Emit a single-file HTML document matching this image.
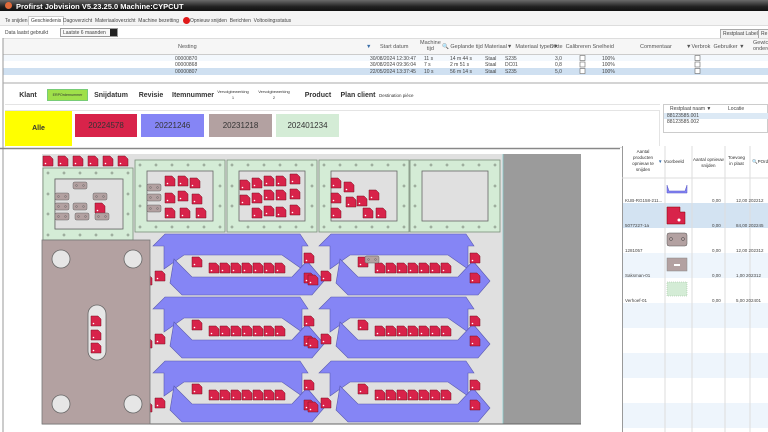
<!DOCTYPE html>
<html><head><meta charset="utf-8">
<style>
*{margin:0;padding:0;box-sizing:border-box}
body{width:768px;height:432px;overflow:hidden;background:#fff;font-family:"Liberation Sans",sans-serif;position:relative;color:#333}
.a{position:absolute;white-space:nowrap}
.t{font-size:5px;color:#444}
.h{font-size:5.5px;color:#555}
.f{font-size:7px;color:#333;text-align:center}
</style></head><body>
<div class="a" style="left:0;top:0;width:768px;height:11px;background:linear-gradient(#6a6a6a,#222 60%,#111)"></div>
<div class="a" style="left:5px;top:2px;width:7px;height:7px;border-radius:50%;background:#e06a3a"></div>
<div class="a" style="left:16px;top:1.5px;font-size:7.5px;font-weight:bold;color:#fff">Profirst Jobvision V5.23.25.0 Machine:CYPCUT</div>
<div class="a" style="left:0;top:11px;width:768px;height:15px;background:#f4f4f4;border-bottom:1px solid #ddd"></div>
<div class="a t" style="left:5px;top:18px">Te snijden</div>
<div class="a t" style="left:28px;top:16px;background:#fff;border:1px solid #ccc;border-bottom:none;padding:1px 2px">Geschiedenis</div>
<div class="a t" style="left:63px;top:18px">Dagoverzicht &nbsp;Materiaaloverzicht &nbsp;Machine bezetting</div>
<div class="a" style="left:183px;top:17px;width:7px;height:7px;border-radius:50%;background:#e01818"></div>
<div class="a t" style="left:190px;top:18px">Opnieuw snijden &nbsp;Berichten &nbsp;Voltooiingsstatus</div>
<div class="a t" style="left:5px;top:30px">Data laatst gebruikt</div>
<div class="a t" style="left:60px;top:28px;width:58px;height:9px;border:1px solid #999;background:#f8f8f8;padding:1px 2px">Laatste 6 maanden</div>
<div class="a" style="left:110px;top:29px;width:7px;height:7px;background:#222"></div>
<div class="a t" style="left:720px;top:29px;border:1px solid #aaa;background:#f4f4f4;padding:1px 2px">Restplaat Labels</div>
<div class="a t" style="left:758px;top:29px;border:1px solid #aaa;background:#f4f4f4;padding:1px 2px;width:12px">Re</div>
<!-- top table -->
<div class="a" style="left:3px;top:38px;width:765px;height:17px;background:#f6f6f6;border-top:1px solid #ddd;border-bottom:1px solid #ccc"></div>
<div class="a h" style="left:178px;top:44px">Nesting</div>
<div class="a h" style="left:366px;top:44px;color:#3a6ea8">▼</div>
<div class="a h" style="left:380px;top:44px">Start datum</div>
<div class="a h" style="left:420px;top:40px;text-align:center;line-height:6px">Machine<br>tijd</div>
<div class="a h" style="left:442px;top:44px">🔍 Geplande tijd Materiaal▼ &nbsp;Materiaal typen▼</div>
<div class="a h" style="left:550px;top:44px">Dikte &nbsp;Calibreren Snelheid</div>
<div class="a h" style="left:640px;top:44px">Commentaar</div>
<div class="a h" style="left:686px;top:44px">▼Verbrok &nbsp;Gebruiker ▼</div>
<div class="a h" style="left:753px;top:40px;line-height:6px">Gewicht<br>onderde</div>
<div class="a" style="left:3px;top:55px;width:765px;height:6px;background:#f3f8fd"></div>
<div class="a" style="left:3px;top:68px;width:765px;height:7px;background:#cfe0f1"></div>
<div class="a t" style="left:175px;top:55.5px;line-height:6.5px">00000870<br>00000868<br>00000807</div>
<div class="a t" style="left:370px;top:55.5px;line-height:6.5px">30/08/2024 12:30:47<br>30/08/2024 09:36:04<br>22/05/2024 13:37:45</div>
<div class="a t" style="left:424px;top:55.5px;line-height:6.5px">11 s<br>7 s<br>10 s</div>
<div class="a t" style="left:450px;top:55.5px;line-height:6.5px">14 m 44 s<br>2 m 51 s<br>56 m 14 s</div>
<div class="a t" style="left:485px;top:55.5px;line-height:6.5px">Staal<br>Staal<br>Staal</div>
<div class="a t" style="left:505px;top:55.5px;line-height:6.5px">S235<br>DC01<br>S235</div>
<div class="a t" style="left:555px;top:55.5px;line-height:6.5px">3,0<br>0,8<br>5,0</div>
<div class="a t" style="left:602px;top:55.5px;line-height:6.5px">100%<br>100%<br>100%</div>
<div class="a" style="left:580px;top:55px;width:5px;height:19px;background:repeating-linear-gradient(#fff 0 1px,transparent 1px 2px);"></div>
<svg class="a" style="left:0;top:0" width="768" height="432">
<g fill="#fff" stroke="#666" stroke-width=".6"><rect x="580" y="55.5" width="5" height="5"/><rect x="580" y="62" width="5" height="5"/><rect x="580" y="68.5" width="5" height="5"/><rect x="695" y="55.5" width="5" height="5"/><rect x="695" y="62" width="5" height="5"/><rect x="695" y="68.5" width="5" height="5"/></g>
<line x1="3" y1="38" x2="3" y2="432" stroke="#999"/>
<line x1="3" y1="83" x2="768" y2="83" stroke="#aaa"/>
<line x1="0" y1="148.5" x2="620" y2="148.5" stroke="#888" stroke-width="1.5"/>
</svg>
<!-- filter bar -->
<div class="a" style="left:5px;top:86px;width:655px;height:19px;border-bottom:1px solid #e4e4e4"></div>
<div class="a f" style="left:10px;top:92px;width:36px;font-weight:bold">Klant</div>
<div class="a" style="left:47px;top:89px;width:41px;height:12px;background:#9fe04a;border:1px solid #7c7;font-size:3.6px;text-align:center;line-height:11px">ERPOrdernummer</div>
<div class="a f" style="left:92px;top:92px;width:38px;font-weight:bold">Snijdatum</div>
<div class="a f" style="left:132px;top:92px;width:38px;font-weight:bold">Revisie</div>
<div class="a f" style="left:172px;top:92px;width:42px;font-weight:bold">Itemnummer</div>
<div class="a" style="left:213px;top:89px;width:40px;font-size:4px;text-align:center;line-height:6px">Vervolgbewerking<br>1</div>
<div class="a" style="left:254px;top:89px;width:40px;font-size:4px;text-align:center;line-height:6px">Vervolgbewerking<br>2</div>
<div class="a f" style="left:296px;top:92px;width:44px;font-weight:bold">Product</div>
<div class="a f" style="left:338px;top:92px;width:40px;font-weight:bold">Plan client</div>
<div class="a" style="left:379px;top:93px;font-size:4.5px">Destination pièce</div>
<div class="a" style="left:5px;top:110px;width:655px;height:38px;border:1px solid #e4e4e4"></div>
<div class="a f" style="left:5px;top:111px;width:67px;height:35px;background:#ffff00;line-height:35px;font-weight:bold">Alle</div>
<div class="a f" style="left:75px;top:114px;width:62px;height:23px;background:#d8234a;line-height:23px;font-size:8px">20224578</div>
<div class="a f" style="left:141px;top:114px;width:63px;height:23px;background:#8585f5;line-height:23px;font-size:8px">20221246</div>
<div class="a f" style="left:209px;top:114px;width:63px;height:23px;background:#b3a1a1;line-height:23px;font-size:8px">20231218</div>
<div class="a f" style="left:276px;top:114px;width:63px;height:23px;background:#d4ecd6;line-height:23px;font-size:8px">202401234</div>
<!-- restplaat -->
<div class="a" style="left:663px;top:104px;width:105px;height:29px;border:1px solid #ccc;background:#fff"></div>
<div class="a t" style="left:670px;top:106px">Restplaat naam ▼ &nbsp;&nbsp;&nbsp;&nbsp;&nbsp;&nbsp;&nbsp;&nbsp;&nbsp;&nbsp;&nbsp;Locatie</div>
<div class="a" style="left:664px;top:113px;width:104px;height:6px;background:#dce9f5"></div>
<div class="a t" style="left:667px;top:113px;line-height:6px">88123585.001<br>88123585.002</div>
<!-- right table -->
<div class="a" style="left:622px;top:146px;width:146px;height:286px;border-left:1px solid #999;background:#fff"></div>
<div class="a" style="left:623px;top:178px;width:145px;height:254px;background:repeating-linear-gradient(#fff 0 25px,#eef5fc 25px 50px)"></div>
<div class="a" style="left:623px;top:203px;width:145px;height:25px;background:#d3e3f2"></div>
<svg class="a" style="left:622px;top:146px" width="146" height="286"><g stroke="#ddd"><line x1="43" y1="0" x2="43" y2="286"/><line x1="70" y1="0" x2="70" y2="286"/><line x1="103" y1="0" x2="103" y2="286"/><line x1="128" y1="0" x2="128" y2="286"/><line x1="0" y1="32" x2="146" y2="32"/></g></svg>
<div class="a" style="left:625px;top:149px;width:36px;font-size:4.5px;text-align:center;line-height:6px">Aantal<br>producten<br>opnieuw te<br>snijden</div>
<div class="a" style="left:658px;top:159px;font-size:4.5px"><span style="color:#3a6ea8">▼</span> Voorbeeld</div>
<div class="a" style="left:693px;top:157px;font-size:4.5px;text-align:center;line-height:6px">Aantal opnieuw<br>snijden</div>
<div class="a" style="left:728px;top:155px;font-size:4.5px;text-align:center;line-height:6px">Toevoeg<br>in plaat</div>
<div class="a" style="left:752px;top:159px;font-size:4.5px">🔍POrdern</div>
<div class="a t" style="left:625px;top:188px;line-height:25px;font-size:4.5px">KUB-RG158-211...<br>5077227-1a<br>1281057<br>Saksman-01<br>Verhoef-01</div>
<div class="a t" style="left:712px;top:188px;line-height:25px;font-size:4.5px">0,00<br>0,00<br>0,00<br>0,00<br>0,00</div>
<div class="a t" style="left:736px;top:188px;line-height:25px;font-size:4.5px">12,00 202212<br>84,00 202245<br>12,00 202312<br>1,00 202312<br>5,00 202401</div>
<svg class="a" style="left:665px;top:180px" width="30" height="125">
<path d="M2 5 L4 11 H20 L22 5 V13 H2Z" fill="#8585f5" stroke="#5555c5" stroke-width=".5"/>
<path d="M2 27 H15 V32 H20 V44 H2Z" fill="#d8234a" stroke="#800" stroke-width=".5"/><circle cx="14" cy="40" r="1.5" fill="#fff"/>
<rect x="2" y="53" width="20" height="13" rx="2" fill="#b3a1a1" stroke="#555" stroke-width=".5"/><circle cx="6" cy="59" r="1.5" fill="none" stroke="#444" stroke-width=".5"/><circle cx="18" cy="59" r="1.5" fill="none" stroke="#444" stroke-width=".5"/>
<rect x="2" y="78" width="20" height="13" fill="#b3a1a1" stroke="#888" stroke-width=".5"/><rect x="9" y="84" width="6" height="2" fill="#fff"/>
<rect x="2" y="102" width="20" height="14" fill="#d4ecd6" stroke="#9b9" stroke-width=".5" stroke-dasharray="1 1"/>
</svg>
<!-- canvas -->
<svg class="a" style="left:0;top:0" width="620" height="432">
<defs>
<g id="r"><path d="M0 0H7L10 3V10H0Z" fill="#d8234a" stroke="#7a1020" stroke-width=".5"/><circle cx="2.5" cy="7.5" r=".8" fill="#fff"/></g>
<g id="bp"><rect width="14" height="7" rx="1.5" fill="#b3a1a1" stroke="#666" stroke-width=".5"/><circle cx="3.5" cy="3.5" r=".9" fill="none" stroke="#555" stroke-width=".4"/><circle cx="10.5" cy="3.5" r=".9" fill="none" stroke="#555" stroke-width=".4"/></g>
<g id="pn"><rect width="90" height="72" fill="#d4ecd6" stroke="#7a8f7a" stroke-width=".8"/><rect x="12" y="11" width="66" height="50" fill="#e0e0e0" stroke="#666" stroke-width=".8"/>
<g fill="#a6bba6" stroke="#777" stroke-width=".3"><circle cx="5" cy="5" r="1.2"/><circle cx="21" cy="5" r="1.2"/><circle cx="37" cy="5" r="1.2"/><circle cx="53" cy="5" r="1.2"/><circle cx="69" cy="5" r="1.2"/><circle cx="85" cy="5" r="1.2"/><circle cx="5" cy="67" r="1.2"/><circle cx="21" cy="67" r="1.2"/><circle cx="37" cy="67" r="1.2"/><circle cx="53" cy="67" r="1.2"/><circle cx="69" cy="67" r="1.2"/><circle cx="85" cy="67" r="1.2"/><circle cx="5" cy="26" r="1.2"/><circle cx="5" cy="46" r="1.2"/><circle cx="85" cy="26" r="1.2"/><circle cx="85" cy="46" r="1.2"/></g></g>
<g id="u">
<path d="M1 13 L13 1 H148 L156 13 H150 V36 L130 22 H32 L12 36 V13Z" fill="#8585f5" stroke="#5a5ab0" stroke-width=".6"/>
<path d="M22 26 L40 44 H140 L155 28 L172 48 L160 62 H30 L18 50Z" fill="#8585f5" stroke="#5a5ab0" stroke-width=".6"/>
<use href="#r" x="40" y="24"/><use href="#r" x="57" y="30"/><use href="#r" x="68" y="30"/><use href="#r" x="79" y="30"/><use href="#r" x="90" y="30"/><use href="#r" x="101" y="30"/><use href="#r" x="112" y="30"/><use href="#r" x="123" y="30"/>
<use href="#r" x="-10" y="42"/><use href="#r" x="3" y="38"/><use href="#r" x="152" y="20"/><use href="#r" x="152" y="40"/>
</g>
<clipPath id="c"><rect x="42" y="154" width="461" height="270"/></clipPath>
</defs>
<rect x="42" y="154" width="461" height="270" fill="#e0e0e0"/>
<rect x="503" y="154" width="78" height="270" fill="#9b9b9b"/>
<line x1="503" y1="154" x2="503" y2="424" stroke="#8cc" stroke-width=".8"/>
<line x1="42" y1="424" x2="581" y2="424" stroke="#666"/>
<g clip-path="url(#c)">
<use href="#u" x="152" y="233"/><use href="#u" x="318" y="233"/>
<use href="#u" x="152" y="296"/><use href="#u" x="318" y="296"/>
<use href="#u" x="152" y="360"/><use href="#u" x="318" y="360"/>
</g>
<use href="#r" x="43" y="156"/><use href="#r" x="58" y="156"/><use href="#r" x="73" y="156"/><use href="#r" x="88" y="156"/><use href="#r" x="103" y="156"/><use href="#r" x="118" y="156"/>
<use href="#pn" x="43" y="168" transform="translate(0 0)"/>
<rect x="55" y="179" width="68" height="50" fill="#e0e0e0" stroke="#666" stroke-width=".8"/>
<use href="#bp" x="73" y="182"/><use href="#bp" x="55" y="193"/><use href="#bp" x="93" y="193"/><use href="#bp" x="55" y="203"/><use href="#bp" x="73" y="203"/><use href="#r" x="95" y="203"/><use href="#bp" x="55" y="213"/><use href="#bp" x="75" y="213"/><use href="#bp" x="95" y="213"/>
<use href="#pn" x="135" y="160"/><use href="#pn" x="227" y="160"/><use href="#pn" x="319" y="160"/><use href="#pn" x="410" y="160"/>
<use href="#bp" x="147" y="184"/><use href="#bp" x="147" y="194"/><use href="#bp" x="147" y="205"/>
<use href="#r" x="165" y="176"/><use href="#r" x="178" y="176"/><use href="#r" x="190" y="178"/><use href="#r" x="165" y="193"/><use href="#r" x="178" y="191"/><use href="#r" x="192" y="194"/><use href="#r" x="165" y="208"/><use href="#r" x="180" y="208"/><use href="#r" x="196" y="208"/>
<use href="#r" x="240" y="180"/><use href="#r" x="252" y="178"/><use href="#r" x="264" y="176"/><use href="#r" x="276" y="176"/><use href="#r" x="290" y="174"/><use href="#r" x="240" y="195"/><use href="#r" x="252" y="193"/><use href="#r" x="264" y="190"/><use href="#r" x="276" y="190"/><use href="#r" x="290" y="189"/><use href="#r" x="252" y="208"/><use href="#r" x="264" y="206"/><use href="#r" x="276" y="207"/><use href="#r" x="290" y="205"/>
<use href="#r" x="331" y="178"/><use href="#r" x="344" y="182"/><use href="#r" x="331" y="193"/><use href="#r" x="346" y="197"/><use href="#r" x="357" y="196"/><use href="#r" x="369" y="190"/><use href="#r" x="331" y="208"/><use href="#r" x="363" y="208"/><use href="#r" x="376" y="208"/>
<rect x="42" y="240" width="108" height="184" fill="#b3a1a1" stroke="#777" stroke-width=".8"/>
<g fill="#e6e6e6" stroke="#666" stroke-width=".8"><circle cx="61" cy="259" r="9"/><circle cx="133" cy="259" r="9"/><circle cx="61" cy="404" r="9"/><circle cx="133" cy="404" r="9"/><rect x="88" y="305" width="18" height="55" rx="9"/></g>
<use href="#r" x="91" y="316"/><use href="#r" x="91" y="330"/><use href="#r" x="91" y="343"/>
<use href="#bp" x="365" y="256"/>
</svg>
</body></html>
